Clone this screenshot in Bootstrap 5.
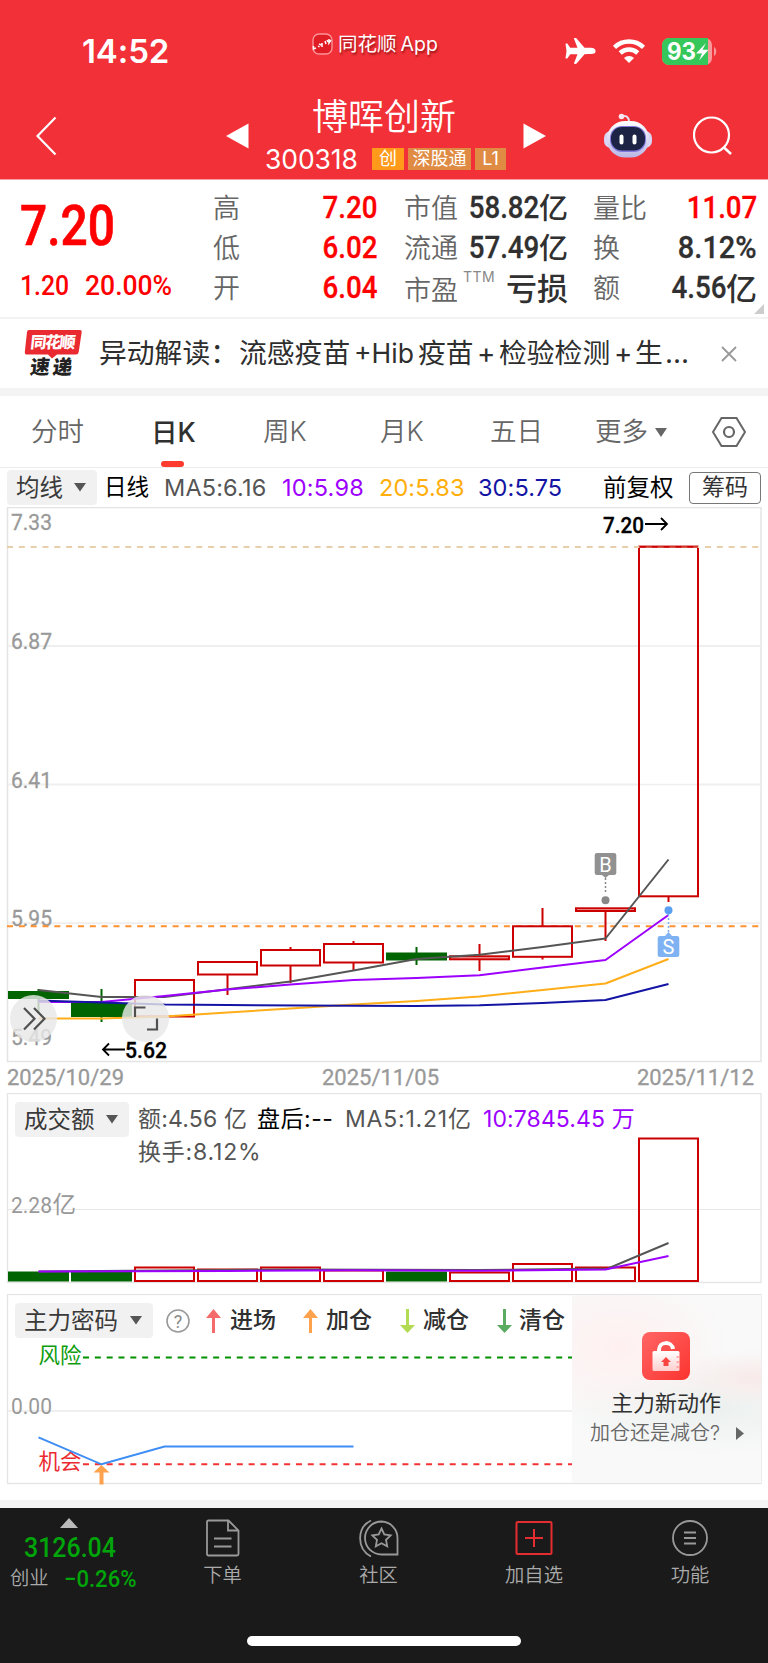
<!DOCTYPE html>
<html lang="zh-CN">
<head>
<meta charset="utf-8">
<meta name="viewport" content="width=device-width, initial-scale=1">
<title>博晖创新 300318</title>
<link href="https://cdn.jsdelivr.net/npm/bootstrap@5.3.0/dist/css/bootstrap.min.css" rel="stylesheet">
<style>
  :root { --brand:#f23038; --up:#ff0000; --ink:#303030; --dim:#666; --violet:#9d00ff; --amber:#ffae0a; --navy:#1414a4; }
  body { width:768px; font-family:Inter,"Noto Sans CJK SC",sans-serif; color:var(--ink); background:#fff; line-height:1; overflow-x:hidden; }
  svg { display:block; }
  svg text { font-family:Roboto,"Noto Sans CJK SC",sans-serif; }
  .tracks { display:grid; align-items:center; white-space:nowrap; }
  .din { display:inline-block; font-family:Roboto,"Noto Sans CJK SC",sans-serif; font-weight:500; transform:scaleX(.87); transform-origin:left center; }
  .stack { display:grid; }
  .stack > * { grid-area:1/1; }

  .top-bar { background:var(--brand); height:180px; border-bottom:1px solid #f9a0a4; }
  .status-row { height:88px; grid-template-columns:82px 230px 26px 227px 47px 50px 1fr; padding-top:14px; }
  .clock { font-size:33px; font-weight:600; letter-spacing:-.1px; }
  .app-mark { margin-bottom:14px; }
  .app-name { font-size:19.5px; text-shadow:1px 2px 2px rgba(90,0,0,.6); margin-bottom:13px; }
  .title-row { height:91px; padding-top:4px; grid-template-columns:36px 190px 39px 258px 81px 89px 1fr; }
  .stock-name { font-size:36px; font-weight:350; height:51px; line-height:44px; padding-left:47px; }
  .stock-code { font-size:26.5px; letter-spacing:-.1px; width:107px; }
  .tag { height:22px; line-height:21px; font-size:18px; background:#e08b44; color:#fff; text-align:center; margin-right:4px; }
  .tag-hot { background:#ff9a1a; }

  .quote { height:139px; border-bottom:2px solid #f3f3f3; grid-template-columns:213px 164px 27px 164px 25px 164px; position:relative; align-items:start; }
  .price { font-size:55px; height:54px; line-height:54px; -webkit-text-stroke:.7px var(--up); }
  .delta { font-size:28.5px; height:40px; line-height:40px; }
  .qcol { padding-top:8px; }
  .qrow { height:40px; display:flex; justify-content:space-between; align-items:center; font-size:27px; }
  .qrow .label-dim { color:var(--dim); font-weight:350; }
  .qrow .val { font-size:29px; font-weight:500; display:flex; align-items:center; }
  .qrow .din { font-size:31.500px; transform:scaleX(.88); transform-origin:right center; -webkit-text-stroke:.3px currentColor; }
  .ttm { font-size:14px; color:#888; align-self:flex-start; margin-top:2px; letter-spacing:.5px; margin-left:5px; margin-right:auto; }
  .corner-mark { position:absolute; right:4px; bottom:3px; }

  .news { height:69px; grid-template-columns:24px 75px 622px 1fr; font-size:27.8px; color:#2e2e2e; }
  .news svg { overflow:visible; }
  .band { height:8px; background:#f4f4f4; }
  .periods { height:72px; border-bottom:1px solid #ececec; grid-template-columns:31px 120px 112px 117px 110px 105px 60px 57px 1fr; font-size:26.5px; color:var(--dim); font-weight:350; }
  .periods .current { color:var(--ink); font-weight:500; height:71px; line-height:73px; position:relative; }
  .periods .current::after { content:""; position:absolute; left:10px; bottom:0; width:23px; height:6px; border-radius:3px; background:#ff3b30; }

  .ma-row { height:39px; grid-template-columns:7px 97px 60px 118px 97px 99px 125px 86px 72px; font-size:23.5px; }
  .pick { background:#f1f1f1; border-radius:4px; height:35px; padding:0 11px 0 9px; display:flex; align-items:center; justify-content:space-between; color:#3a3a3a; font-size:23.5px; white-space:nowrap; }
  .chips { height:32px; line-height:29px; border:1px solid #777; border-radius:4px; text-align:center; font-size:23px; color:#333; }
  .c5 { color:#555; } .c10 { color:var(--violet); } .c20 { color:var(--amber); } .c30 { color:var(--navy); }
  .blk { color:#000; }

  .vol-line { grid-template-columns:15px 123px 119px 88px 138px 1fr; font-size:23px; }
  .signal-line { grid-template-columns:15px 150px 41px 24px 73px 23px 74px 23px 74px 22px 1fr; font-size:23px; font-weight:500; }
  .promo { margin:1px 7px 0 572px; height:188px; background:radial-gradient(ellipse 110px 75px at 25% 28%,#fff0f0 0,transparent 100%),radial-gradient(ellipse 90px 28px at 98% 44%,#f8eae9 0,transparent 100%),radial-gradient(ellipse 150px 48px at 72% 60%,#ebf0ee 0,transparent 100%),#f9f9f9; }
  .promo-sub { font-size:20px; color:#666; font-weight:350; grid-template-columns:146px 1fr; padding-left:18px; }

  .dock { height:155px; background:#1a1a1a; color:#aaa; }
  .dock-row { display:grid; grid-template-columns:144px 157px 155px 156px 156px; height:90px; }
  .dock-item { text-align:center; font-size:19.3px; font-weight:350; }
  .dock-item svg { margin:11px auto 9px; }
  .index-green { color:#00a50a; }
  .home-bar { width:274px; height:10px; border-radius:5px; background:#fff; margin:38px auto 0; }
</style>
</head>
<body>
<header class="top-bar text-white">
  <div class="status-row tracks">
    <span></span>
    <span class="clock">14:52</span>
    <svg class="app-mark" width="21" height="22" viewBox="0 0 21 22"><rect x="1" y="1" width="19" height="20" rx="6" fill="#e01c25" stroke="#fa9297" stroke-width="1.4"/><path d="M1.500 13v3l2.500-1M6 13l1.500 1M10 10v4M13 8l1 3M17 6v4l2-3M7 11l2 1M15 7l1 2" fill="none" stroke="#fff" stroke-width="1.500"/></svg>
    <span class="app-name">同花顺<span class="ms-1">App</span></span>
    <svg width="31" height="28" viewBox="0 0 31 28"><path d="M29 11.4c2 .9 2 4.300 0 5.200-1 .5-4 .6-9.500.6L11.600 26.500c-.4.500-2.200.600-2.700.100l3.600-9.400H5.200l-2.700 4c-.4.400-1.600.400-2 0L1.500 14 .5 6.800c.4-.4 1.600-.4 2 0l2.700 4h7.300L8.900 1.400c.5-.5 2.300-.4 2.700.1l7.900 9.300c5.500 0 8.500.1 9.500.6z" fill="#fff"/></svg>
    <svg width="34" height="26" viewBox="0 0 34 26"><path d="M2.500 9.300a21 21 0 0 1 29 0M8.200 15a13 13 0 0 1 17.600 0" fill="none" stroke="#fff" stroke-width="4.500"/><path d="M17 25l-5-5a7 7 0 0 1 10 0z" fill="#fff"/></svg>
    <svg width="55" height="27" viewBox="0 0 55 27"><rect width="50" height="27" rx="7" fill="#f9989b"/><path d="M7 0h39v27H7a7 7 0 0 1-7-7V7a7 7 0 0 1 7-7z" fill="#35c759"/><path d="M52 9c3 1.500 3 7.500 0 9z" fill="#f9989b"/><text x="5" y="22" font-weight="700" font-size="24" textLength="29" lengthAdjust="spacingAndGlyphs" fill="#fff" style="font-family:Inter">93</text><path d="M44 5L34 15.500h6L37 22.500l9.500-10.800h-6z" fill="#fff"/></svg>
  </div>
  <div class="title-row tracks">
    <span></span>
    <svg width="21" height="40" viewBox="0 0 21 40"><path d="M19.500 1.500L1.500 20l18 18.500" fill="none" stroke="#fff" stroke-width="2.200"/></svg>
    <svg width="23" height="26" viewBox="0 0 23 26"><path d="M22.500 .5v25L0 13z" fill="#fff"/></svg>
    <div class="pb-1">
      <div class="stock-name">博晖创新</div>
      <div class="d-flex align-items-center"><span class="stock-code">300318</span><span class="tag tag-hot" style="width:32px">创</span><span class="tag" style="width:63px">深股通</span><span class="tag" style="width:31px">L1</span></div>
    </div>
    <svg width="23" height="26" viewBox="0 0 23 26"><path d="M.5 .5v25L23 13z" fill="#fff"/></svg>
    <svg width="48" height="45" viewBox="0 0 48 45"><defs><linearGradient id="shell" x2="0" y2="1"><stop stop-color="#fff"/><stop offset="1" stop-color="#b9b6e6"/></linearGradient></defs><path d="M18 3q7-1 7 6" fill="none" stroke="#e9e4f5" stroke-width="1.800"/><circle cx="17.500" cy="3.500" r="2.800" fill="#f8e7f0"/><rect x="0" y="18" width="48" height="17" rx="7" fill="#d9d6f5"/><rect x="3" y="8" width="42" height="36.500" rx="18" fill="url(#shell)"/><rect x="6" y="13" width="36" height="26" rx="12" fill="#8178dc"/><rect x="7" y="14" width="34" height="23.500" rx="11" fill="#1c2344"/><path d="M17.500 23.500v6M30.500 23.500v6" stroke="#fff" stroke-width="4" stroke-linecap="round"/></svg>
    <svg width="40" height="40" viewBox="0 0 40 40"><circle cx="18.500" cy="19" r="17.500" fill="none" stroke="#fff" stroke-width="2.200"/><path d="M31 31.500l7 6.500" stroke="#fff" stroke-width="2.500"/></svg>
  </div>
</header>

<section class="quote tracks">
  <div style="padding:18px 0 0 20px;color:var(--up)">
    <div class="price"><span class="din">7.20</span></div>
    <div class="delta d-flex" style="margin-top:14px"><span class="din" style="width:65px">1.20</span><span class="din" style="transform:scaleX(.93)">20.00%</span></div>
  </div>
  <div class="qcol">
    <div class="qrow"><span class="label-dim">高</span><span class="din" style="color:var(--up)">7.20</span></div>
    <div class="qrow"><span class="label-dim">低</span><span class="din" style="color:var(--up)">6.02</span></div>
    <div class="qrow"><span class="label-dim">开</span><span class="din" style="color:var(--up)">6.04</span></div>
  </div>
  <span></span>
  <div class="qcol">
    <div class="qrow"><span class="label-dim">市值</span><span class="val"><span class="din">58.82</span><span>亿</span></span></div>
    <div class="qrow"><span class="label-dim">流通</span><span class="val"><span class="din">57.49</span><span>亿</span></span></div>
    <div class="qrow"><span class="label-dim pt-1">市盈</span><span class="ttm">TTM</span><span class="val" style="font-size:31px">亏损</span></div>
  </div>
  <span></span>
  <div class="qcol">
    <div class="qrow"><span class="label-dim">量比</span><span class="din" style="color:var(--up)">11.07</span></div>
    <div class="qrow"><span class="label-dim">换</span><span class="din" style="transform:scaleX(.92)">8.12%</span></div>
    <div class="qrow"><span class="label-dim">额</span><span class="val"><span class="din">4.56</span><span style="font-size:31px">亿</span></span></div>
  </div>
  <svg class="corner-mark" width="10" height="10"><path d="M10 0v10H0z" fill="#ccc"/></svg>
</section>

<section class="news tracks">
  <span></span>
  <svg width="58" height="54" viewBox="0 -3 58 54"><path d="M5 0h51q2 0 1.700 2l-3 20q-.4 2.500-2.700 2.500H33l-5 4-4-4H2.500Q.5 24.500.8 22L3 2q.3-2 2-2z" fill="#e92b31"/><text x="8" y="18.500" transform="skewX(-6)" font-size="16" font-weight="900" fill="#fff" textLength="45">同花顺</text><text x="11" y="44.500" transform="skewX(-7)" font-size="19.500" font-weight="900" fill="#222" textLength="42">速递</text></svg>
  <div class="d-flex"><span style="width:140px">异动解读：</span><span style="width:115px">流感疫苗</span><span style="width:64px;font-size:26.500px">+Hib</span><span style="width:59px">疫苗</span><span style="width:22px">+</span><span style="width:115px">检验检测</span><span style="width:21px">+</span><span style="width:30px">生</span><span>…</span></div>
  <svg width="16" height="16"><path d="M1 1l14 14M15 1L1 15" stroke="#999" stroke-width="1.800"/></svg>
</section>
<div class="band"></div>

<nav class="periods tracks">
  <span></span><span>分时</span><span class="current">日K</span><span>周K</span><span>月K</span><span>五日</span><span>更多</span>
  <svg width="12" height="10"><path d="M0 1h12L6 10z" fill="#666"/></svg>
  <svg width="34" height="32" viewBox="0 0 34 32"><path d="M9.500 2h15L33 16l-8.500 14h-15L1 16z" fill="none" stroke="#666" stroke-width="2"/><circle cx="17" cy="16" r="5" fill="none" stroke="#666" stroke-width="2.200"/></svg>
</nav>

<div class="ma-row tracks">
  <span></span>
  <div class="pick" style="width:90px"><span>均线</span><svg width="12" height="9"><path d="M0 0h12L6 8.500z" fill="#555"/></svg></div>
  <span class="blk" style="font-size:22.500px">日线</span>
  <span class="c5" style="letter-spacing:.15px">MA5:6.16</span>
  <span class="c10" style="letter-spacing:.2px">10:5.98</span><span class="c20" style="letter-spacing:.1px">20:5.83</span><span class="c30" style="letter-spacing:.1px">30:5.75</span>
  <span class="blk">前复权</span>
  <span class="chips">筹码</span>
</div>

<svg width="768" height="586" viewBox="0 507 768 586">
  <rect x="7.500" y="507.500" width="753.500" height="554" fill="none" stroke="#e4e4e4" stroke-width="1.500"/>
  <path d="M8 646h753M8 784.500h753M8 923.300h753" stroke="#efefef" stroke-width="2"/>
  <g font-size="22.500" fill="#999" stroke="#999" stroke-width=".3">
    <text x="11" y="530" textLength="41" lengthAdjust="spacingAndGlyphs">7.33</text>
    <text x="11" y="649" textLength="41" lengthAdjust="spacingAndGlyphs">6.87</text>
    <text x="11" y="787.500" textLength="41" lengthAdjust="spacingAndGlyphs">6.41</text>
    <text x="11" y="926" textLength="41" lengthAdjust="spacingAndGlyphs">5.95</text>
    <text x="11" y="1045" textLength="41" lengthAdjust="spacingAndGlyphs">5.49</text>
    <text x="7" y="1084.500" textLength="117" lengthAdjust="spacingAndGlyphs">2025/10/29</text>
    <text x="322" y="1084.500" textLength="117" lengthAdjust="spacingAndGlyphs">2025/11/05</text>
    <text x="637" y="1084.500" textLength="117" lengthAdjust="spacingAndGlyphs">2025/11/12</text>
  </g>
  <path d="M7 926.300h754" stroke="#ff9130" stroke-width="2" stroke-dasharray="6 5.830"/>
  <g fill="none" stroke="#cc0000" stroke-width="2">
    <rect x="135" y="980" width="59" height="36.500"/>
    <rect x="198" y="962" width="59" height="12.500"/><path d="M227.500 974v21"/>
    <rect x="261" y="950" width="59" height="15.500"/><path d="M290.500 947v3M290.500 965v18"/>
    <rect x="324" y="944" width="59" height="18.500"/><path d="M353.500 941v3M353.500 962v8"/>
    <rect x="450" y="956.300" width="59" height="3" fill="#f4bcbc"/><path d="M479.500 944v12M479.500 959v12"/>
    <rect x="513" y="926.300" width="59" height="30.500" fill="#fff"/><path d="M542.500 908v18M542.500 957v2.500"/>
    <rect x="576" y="908.300" width="59" height="2.700" fill="#f4bcbc"/><path d="M605.500 911v30"/>
    <rect x="639" y="546.700" width="59" height="349.600" fill="#fff"/><path d="M668.500 896v6"/>
  </g>
  <path d="M640 646h57M640 784.500h57" stroke="#efefef" stroke-width="1.500"/>
  <path d="M7 547h754" stroke="#e6cfaa" stroke-width="2" stroke-dasharray="6 5.830"/>
  <path d="M639 546.700h59" stroke="#cc0000" stroke-width="2" opacity=".75"/>
  <g fill="#006400"><path d="M8 991h61v8H8zM71 1003h61v14H71zM386 952.500h61v8h-61z"/><path d="M37.500 989h2v24h-2zM100.500 989h2v33h-2zM415.500 947h2v18h-2z"/></g>
  <g fill="none" stroke-width="2" stroke-linejoin="round">
    <path d="M38.500 990L101.500 997H164.500L227.500 989.300 290.500 981.500 353.500 970.500 416.500 959 479.500 954.700 542.500 947 605.500 938.500 668.500 859.500" stroke="#555"/>
    <path d="M38.500 1002H101.500L164.500 996 227.500 989.500 290.500 984.500 353.500 980 416.500 978 479.500 975.300 542.500 967.500 605.500 960 668.500 915" stroke="#9d00ff"/>
    <path d="M38.500 1018.500H101.500L164.500 1016.500 227.500 1012.500 290.500 1008.500 353.500 1004.500 416.500 1001 479.500 996.500 542.500 990 605.500 983.500 668.500 959" stroke="#ffae1a"/>
    <path d="M38.500 1000.500L101.500 1002.500 164.500 1004.500 227.500 1005 353.500 1005.700 416.500 1006 479.500 1005.300 542.500 1003 605.500 1000 668.500 984" stroke="#1414a4"/>
  </g>
  <g fill="#e8e8e8" fill-opacity=".82"><circle cx="33.500" cy="1018.500" r="23.500"/><circle cx="145.500" cy="1018.500" r="23.500"/></g>
  <g fill="none" stroke="#505050" stroke-width="2.200"><path d="M24 1008l10.500 10.700L24 1029.500M34 1008l10.500 10.700L34 1029.500"/><path d="M135 1017v-9.500h10.500M147 1029.500h10v-11"/></g>
  <g fill="#000" font-size="22.500" font-weight="500" stroke="#000" stroke-width=".3"><text x="125" y="1057.500" textLength="42" lengthAdjust="spacingAndGlyphs">5.62</text><text x="603" y="532.500" textLength="41" lengthAdjust="spacingAndGlyphs">7.20</text></g>
  <path d="M125 1049.500h-22m6-6l-6 6 6 6M645 524h22m-6-6l6 6-6 6" fill="none" stroke="#000" stroke-width="1.800"/>
  <path d="M605.500 878v15" stroke="#888" stroke-width="1.500" stroke-dasharray="2 2"/><circle cx="605.500" cy="900.300" r="4" fill="#888"/>
  <path d="M597 853h17q2.300 0 2.300 2v18q0 2-2.300 2h-5l-3.500 3-3.500-3h-5q-2.300 0-2.300-2v-18q0-2 2.300-2z" fill="#919191"/>
  <path d="M668.500 914v19" stroke="#78aef2" stroke-width="1.500" stroke-dasharray="2 2"/><circle cx="668.500" cy="910.200" r="4" fill="#5ba0f0"/>
  <path d="M660 936h5l3.500-4 3.500 4h5q2.300 0 2.300 2v17q0 2-2.300 2h-17q-2.300 0-2.300-2v-17q0-2 2.300-2z" fill="#7fb2f2"/>
  <g fill="#fff" font-size="20" text-anchor="middle"><text x="605.500" y="871.500">B</text><text x="668.500" y="954">S</text></g>
</svg>

<section class="stack">
  <svg width="768" height="201" viewBox="0 1093 768 201">
    <rect x="7.500" y="1093.500" width="753.500" height="189" fill="none" stroke="#e4e4e4" stroke-width="1.300"/>
    <path d="M8 1209.500h753" stroke="#e8e8e8"/>
    <text x="11" y="1212.500" font-size="22.500" fill="#999" textLength="41" lengthAdjust="spacingAndGlyphs">2.28</text><text x="52.500" y="1213" font-size="23.500" fill="#999">亿</text>
    <path d="M8 1271.500h61v10H8zM71 1271.500h61v10H71zM386 1271.500h61v10h-61z" fill="#006400"/>
    <g fill="none" stroke="#cc0000" stroke-width="2"><rect x="135" y="1267.500" width="59" height="13.500"/><rect x="198" y="1269.500" width="59" height="11.500"/><rect x="261" y="1267.500" width="59" height="13.500"/><rect x="324" y="1270.500" width="59" height="10.500"/><rect x="450" y="1272.500" width="59" height="8.500"/><rect x="513" y="1264" width="59" height="17"/><rect x="576" y="1267.500" width="59" height="13.500"/><rect x="639" y="1138.500" width="59" height="142.500"/></g>
    <g fill="none" stroke-width="2"><path d="M38.500 1271.500L290.500 1269.500 479.500 1270 608 1268.500 668.500 1243" stroke="#555"/><path d="M38.500 1271.500L227.500 1271 353.500 1270.300 479.500 1270.800 605.500 1269.500 668.500 1256" stroke="#9d00ff"/></g>
  </svg>
  <div>
    <div class="vol-line tracks" style="margin-top:9px">
      <span></span><div class="pick" style="width:114px"><span>成交额</span><svg width="12" height="9"><path d="M0 0h12L6 8.500z" fill="#555"/></svg></div>
      <span class="c5" style="letter-spacing:.2px">额:4.56 亿</span><span class="blk" style="letter-spacing:.5px">盘后:--</span><span class="c5" style="letter-spacing:.8px">MA5:1.21亿</span><span class="c10" style="letter-spacing:.1px">10:7845.45 万</span>
    </div>
    <div class="c5" style="font-size:23px;padding:4px 0 0 138px;letter-spacing:.8px">换手:8.12%</div>
  </div>
</section>

<section class="stack">
  <svg width="768" height="206" viewBox="0 1294 768 206">
    <rect x="7.500" y="1294.500" width="753.500" height="189" fill="none" stroke="#e4e4e4" stroke-width="1.300"/>
    <path d="M8 1411h564" stroke="#efefef" stroke-width="2"/>
    <text x="11" y="1413.800" font-size="22.500" fill="#999" textLength="41" lengthAdjust="spacingAndGlyphs">0.00</text>
    <path d="M83 1357.500h489" stroke="#009000" stroke-width="2" stroke-dasharray="6 5.830"/>
    <path d="M83 1464.200h489" stroke="#f33235" stroke-width="2" stroke-dasharray="6 5.830"/>
    <g font-size="21.500"><text x="38.500" y="1362.500" fill="#0c9c0c">风险</text><text x="38.500" y="1469" fill="#ec2b30">机会</text></g>
    <path d="M38.500 1437.300L101.500 1464.300 164.500 1446.500H353.500" fill="none" stroke="#3e8df5" stroke-width="2"/>
    <path d="M101.500 1465l8 7.500h-6v12h-4v-12h-6z" fill="#ffa24d"/>
  </svg>
  <div class="signal-line tracks" style="margin-top:9px;height:35px">
    <span></span><div class="pick fw-normal" style="width:138px"><span>主力密码</span><svg width="12" height="9"><path d="M0 0h12L6 8.500z" fill="#555"/></svg></div>
    <svg width="26" height="26" viewBox="0 0 26 26"><circle cx="13" cy="13" r="11" fill="none" stroke="#999" stroke-width="1.600"/><text x="13" y="19.500" text-anchor="middle" font-size="18" font-weight="400" fill="#888">?</text></svg>
    <svg width="15" height="24"><path d="M7.500 0l7.500 9H9v15H6V9H0z" fill="#f56b6b"/></svg><span>进场</span>
    <svg width="15" height="24"><path d="M7.500 0l7.500 9H9v15H6V9H0z" fill="#ffa24d"/></svg><span>加仓</span>
    <svg width="15" height="24"><path d="M7.500 24L0 16h6V0h3v16h6z" fill="#b2da52"/></svg><span>减仓</span>
    <svg width="15" height="24"><path d="M7.500 24L0 16h6V0h3v16h6z" fill="#5bab61"/></svg><span>清仓</span>
  </div>
  <aside class="promo">
    <svg width="48" height="48" viewBox="0 0 48 48" style="margin:37px 0 0 70px"><defs><linearGradient id="lockbg" x2="1" y2="1"><stop stop-color="#ff6565"/><stop offset="1" stop-color="#fb342f"/></linearGradient><linearGradient id="lockbody" x2="0" y2="1"><stop stop-color="#fff"/><stop offset="1" stop-color="#ffcfcd"/></linearGradient></defs><rect width="48" height="48" rx="8" fill="url(#lockbg)"/><path d="M17 22v-4c0-9 13-9 14-1" fill="none" stroke="#fff" stroke-width="4"/><rect x="10.500" y="19" width="27" height="20" rx="1.500" fill="url(#lockbody)"/><path d="M24 25l5 5h-2.500v4h-5v-4H19z" fill="#fa4441"/><path d="M34.500 25h3M34.500 30h3M34.500 35h3" stroke="#ff9a98" stroke-width="1.500"/></svg>
    <div style="font-size:22px;padding-left:39px;margin-top:12px">主力新动作</div>
    <div class="promo-sub tracks" style="margin-top:9px"><span>加仓还是减仓?</span><svg width="8" height="13"><path d="M0 0l8 6.500L0 13z" fill="#666"/></svg></div>
  </aside>
</section>
<div class="band"></div>

<footer class="dock">
  <div class="dock-row">
    <div>
      <svg width="18" height="10" style="margin:10px 0 0 60px"><path d="M9 0l9 10H0z" fill="#bbb"/></svg>
      <div class="index-green" style="font-size:28px;padding:5px 0 0 24px"><span class="din" style="transform:scaleX(.89)">3126.04</span></div>
      <div class="d-flex align-items-center" style="padding:5px 0 0 10px;font-size:19.300px;font-weight:350"><span style="width:54px">创业</span><span class="din index-green" style="font-size:24px;transform:scaleX(.92)">−0.26%</span></div>
    </div>
    <div class="dock-item"><svg width="38" height="38" viewBox="2 0 38 38" fill="none" stroke="#999" stroke-width="1.800"><path d="M7 1.500h18l10 10V35q0 1.500-1.500 1.500H5q-1.500 0-1.500-1.500V3q0-1.500 1.500-1.500z" transform="translate(1.500)"/><path d="M26 1.500v10h10M12 19.500h17.500M12 27.500h17.500"/></svg>下单</div>
    <div class="dock-item"><svg width="42" height="38" viewBox="0 0 42 38" fill="none" stroke="#999" stroke-width="1.800"><path d="M23.500 2.500A16.500 16.500 0 0 0 23.500 35.500H39.500V19A16.500 16.500 0 0 0 23.500 2.500z"/><path d="M13 1.500C-1.500 8.500-1.500 30 13 37.500"/><path d="M23.500 9.500l2.800 5.900 6.400.9-4.700 4.500 1.200 6.500-5.700-3.100-5.700 3.100 1.200-6.500-4.700-4.500 6.400-.9z"/></svg>社区</div>
    <div class="dock-item"><svg width="38" height="38" viewBox="0 0 38 38" fill="none" stroke="#e32d30" stroke-width="2"><rect x="1.500" y="3" width="35" height="32" rx="1"/><path d="M19 10v18M10 19h18"/></svg>加自选</div>
    <div class="dock-item"><svg width="38" height="38" viewBox="0 0 38 38" fill="none" stroke="#999" stroke-width="1.800"><circle cx="19" cy="19" r="17"/><path d="M13 13.500h12M13 19h12M13 24.500h12"/></svg>功能</div>
  </div>
  <div class="home-bar"></div>
</footer>
<script src="https://cdn.jsdelivr.net/npm/bootstrap@5.3.0/dist/js/bootstrap.bundle.min.js"></script>
</body>
</html>
